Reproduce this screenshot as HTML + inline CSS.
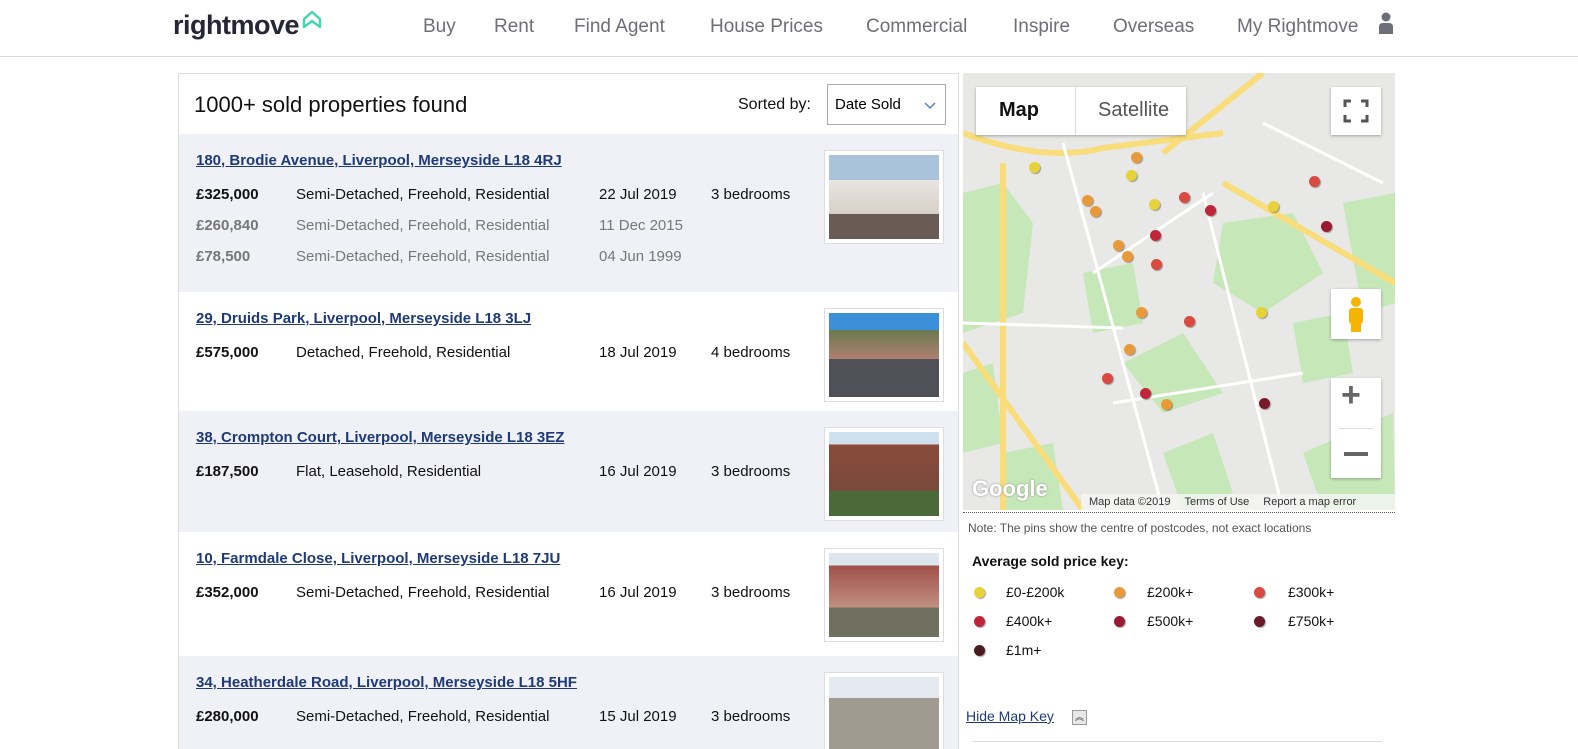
<!DOCTYPE html><html style="overflow:hidden;width:1578px;height:749px"><head><style>
body{margin:0;width:1578px;height:749px;overflow:hidden;background:#fff;font-family:"Liberation Sans",sans-serif;position:relative}
.hdr{position:absolute;left:0;top:0;width:1578px;height:56px;border-bottom:1px solid #d8d8d8}
.logo{position:absolute;left:173px;top:10px;font-size:27px;font-weight:bold;color:#262637;letter-spacing:-0.5px}
.nav{position:absolute;top:16px;font-size:19px;color:#6e6e78}
.panel{position:absolute;left:178px;top:73px;width:779px;height:676px;border:1px solid #ddd;border-bottom:none;overflow:hidden}
.row{position:absolute;left:0;width:779px}
.g{background:#f0f1f6}
.addr{position:absolute;left:17px;top:18px;font-size:15px;font-weight:bold;color:#1e3a78;text-decoration:underline}
.l{position:absolute;font-size:15px;color:#111}
.o{color:#777}
.ph{position:absolute;left:645px;top:16px;width:118px;height:92px;border:1px solid #ddd;background:#fff}
.ph div{position:absolute;left:4px;top:4px;right:4px;bottom:4px}
.map{position:absolute;left:963px;top:73px;width:432px;height:437px;background:#e8e8e6;overflow:hidden}
.pin{position:absolute;width:11px;height:11px;border-radius:50%;box-shadow:1px 1px 1px rgba(0,0,0,.35)}
.k{position:absolute;font-size:14px;color:#111}
.kd{position:absolute;width:11px;height:11px;border-radius:50%;box-shadow:1px 1px 1px rgba(0,0,0,.35)}
</style></head><body>
<div class="hdr">
<div class="logo">rightmove<svg width="22" height="22" viewBox="0 0 22 22" style="position:absolute;left:128px;top:-1px"><path d="M3 18V10L11 3L19 10V18L11 12Z" fill="none" stroke="#3fd6b0" stroke-width="2.4" stroke-linejoin="round"/></svg></div>
<span class="nav" style="left:423px">Buy</span><span class="nav" style="left:494px">Rent</span><span class="nav" style="left:574px">Find Agent</span><span class="nav" style="left:710px">House Prices</span><span class="nav" style="left:866px">Commercial</span><span class="nav" style="left:1013px">Inspire</span><span class="nav" style="left:1113px">Overseas</span><span class="nav" style="left:1237px">My Rightmove</span>
<svg width="16" height="22" viewBox="0 0 16 22" style="position:absolute;left:1378px;top:12px"><circle cx="8" cy="5" r="4.5" fill="#6e6e78"/><path d="M1 22V15Q1 11 5 11H11Q15 11 15 15V22Z" fill="#6e6e78"/></svg>
</div>
<div class="panel">
<div style="position:absolute;left:15px;top:18px;font-size:22px;color:#111">1000+ sold properties found</div>
<div style="position:absolute;left:559px;top:22px;font-size:16px;color:#111">Sorted by:</div>
<div style="position:absolute;left:648px;top:10px;width:117px;height:39px;border:1px solid #aaa;background:#fff"><span style="position:absolute;left:7px;top:11px;font-size:15px">Date Sold</span><svg width="12" height="8" style="position:absolute;left:96px;top:17px"><path d="M1 1L6 6L11 1" fill="none" stroke="#6a8fd0" stroke-width="1.6"/></svg></div>

<div class="row g" style="top:60px;height:158px"><div class="addr">180, Brodie Avenue, Liverpool, Merseyside L18 4RJ</div>
<div class="l" style="left:17px;top:52px;font-weight:bold">£325,000</div><div class="l" style="left:117px;top:52px">Semi-Detached, Freehold, Residential</div><div class="l" style="left:420px;top:52px">22 Jul 2019</div><div class="l" style="left:532px;top:52px">3 bedrooms</div>
<div class="l o" style="left:17px;top:83px;font-weight:bold">£260,840</div><div class="l o" style="left:117px;top:83px">Semi-Detached, Freehold, Residential</div><div class="l o" style="left:420px;top:83px">11 Dec 2015</div>
<div class="l o" style="left:17px;top:114px;font-weight:bold">£78,500</div><div class="l o" style="left:117px;top:114px">Semi-Detached, Freehold, Residential</div><div class="l o" style="left:420px;top:114px">04 Jun 1999</div>
<div class="ph"><div style="background:linear-gradient(#a9c3dc 30%,#e8e4e0 30%,#d8d0c8 70%,#6b5b55 70%)"></div></div></div>

<div class="row" style="top:218px;height:119px"><div class="addr">29, Druids Park, Liverpool, Merseyside L18 3LJ</div>
<div class="l" style="left:17px;top:52px;font-weight:bold">£575,000</div><div class="l" style="left:117px;top:52px">Detached, Freehold, Residential</div><div class="l" style="left:420px;top:52px">18 Jul 2019</div><div class="l" style="left:532px;top:52px">4 bedrooms</div>
<div class="ph"><div style="background:linear-gradient(#3a8fd8 20%,#6a7a50 20%,#b08070 55%,#505058 55%)"></div></div></div>

<div class="row g" style="top:337px;height:121px"><div class="addr">38, Crompton Court, Liverpool, Merseyside L18 3EZ</div>
<div class="l" style="left:17px;top:52px;font-weight:bold">£187,500</div><div class="l" style="left:117px;top:52px">Flat, Leasehold, Residential</div><div class="l" style="left:420px;top:52px">16 Jul 2019</div><div class="l" style="left:532px;top:52px">3 bedrooms</div>
<div class="ph"><div style="background:linear-gradient(#cfe0ee 15%,#8a4a3a 15%,#7a4a3a 70%,#4a6a3a 70%)"></div></div></div>

<div class="row" style="top:458px;height:124px"><div class="addr">10, Farmdale Close, Liverpool, Merseyside L18 7JU</div>
<div class="l" style="left:17px;top:52px;font-weight:bold">£352,000</div><div class="l" style="left:117px;top:52px">Semi-Detached, Freehold, Residential</div><div class="l" style="left:420px;top:52px">16 Jul 2019</div><div class="l" style="left:532px;top:52px">3 bedrooms</div>
<div class="ph"><div style="background:linear-gradient(#dde6ef 15%,#a05048 15%,#c09080 65%,#707060 65%)"></div></div></div>

<div class="row g" style="top:582px;height:120px"><div class="addr">34, Heatherdale Road, Liverpool, Merseyside L18 5HF</div>
<div class="l" style="left:17px;top:52px;font-weight:bold">£280,000</div><div class="l" style="left:117px;top:52px">Semi-Detached, Freehold, Residential</div><div class="l" style="left:420px;top:52px">15 Jul 2019</div><div class="l" style="left:532px;top:52px">3 bedrooms</div>
<div class="ph"><div style="background:linear-gradient(#e4eaf0 25%,#a09a90 25%)"></div></div></div>
</div>

<div class="map">
<svg width="432" height="437" style="position:absolute;left:0;top:0">
<g fill="#c6e8b8"><path d="M0 120L40 110L70 150L60 240L0 260Z"/><path d="M260 150L330 140L360 200L300 240L250 210Z"/><path d="M120 200L170 190L180 250L130 260Z"/><path d="M0 300L30 290L40 370L0 380Z"/><path d="M160 290L220 260L260 320L200 340Z"/><path d="M340 380L430 340L432 437L360 437Z"/><path d="M40 380L90 370L100 437L40 437Z"/><path d="M200 380L250 360L270 420L220 437Z"/><path d="M380 130L432 120L432 230L400 240Z"/><path d="M330 250L380 240L390 300L340 310Z"/></g>
<g fill="none" stroke="#f9dd7a" stroke-width="6"><path d="M0 60Q80 90 140 75L260 60"/><path d="M200 80L300 0"/><path d="M260 110L432 210"/><path d="M0 270L120 437"/><path d="M40 90L40 437"/></g>
<g fill="none" stroke="#fff" stroke-width="3"><path d="M100 70L200 437"/><path d="M130 200L250 120"/><path d="M0 250L160 255"/><path d="M150 330L340 300"/><path d="M240 120L320 437"/><path d="M300 50L420 110"/></g>
</svg>
<div style="position:absolute;left:13px;top:14px;width:210px;height:48px;background:#fff;box-shadow:0 1px 3px rgba(0,0,0,.3)"><span style="position:absolute;left:23px;top:12px;font-size:20px;font-weight:bold;color:#111">Map</span><span style="position:absolute;left:99px;top:0;width:1px;height:48px;background:#ddd"></span><span style="position:absolute;left:122px;top:12px;font-size:20px;color:#555">Satellite</span></div>
<div style="position:absolute;left:368px;top:14px;width:50px;height:48px;background:#fff;box-shadow:0 1px 3px rgba(0,0,0,.3)"><svg width="50" height="48"><path d="M14 20V14H20M30 14H36V20M36 28V34H30M20 34H14V28" fill="none" stroke="#555" stroke-width="3"/></svg></div>
<div style="position:absolute;left:368px;top:216px;width:50px;height:50px;background:#fff;box-shadow:0 1px 3px rgba(0,0,0,.3)"><svg width="50" height="50"><circle cx="25" cy="13" r="5" fill="#f5b400"/><rect x="18" y="19" width="14" height="16" rx="3" fill="#f5b400"/><rect x="20" y="33" width="10" height="10" fill="#f5b400"/></svg></div>
<div style="position:absolute;left:368px;top:305px;width:50px;height:100px;background:#fff;box-shadow:0 1px 3px rgba(0,0,0,.3)"><div style="position:absolute;left:10px;top:-2px;font-size:34px;color:#666;font-weight:bold">+</div><div style="position:absolute;left:8px;top:50px;width:34px;height:1px;background:#ddd"></div><div style="position:absolute;left:13px;top:74px;width:24px;height:4px;background:#666"></div></div>
<div style="position:absolute;left:9px;top:403px;font-size:22px;font-weight:bold;color:#fff;text-shadow:0 0 2px #888">Google</div>
<div style="position:absolute;left:118px;top:421px;width:314px;height:16px;background:rgba(245,245,245,.8);font-size:11px;color:#333;line-height:16px"><span style="margin-left:8px">Map data ©2019</span><span style="margin-left:14px">Terms of Use</span><span style="margin-left:14px">Report a map error</span></div>
<div class="pin" style="left:66px;top:89px;background:#e8d23a"></div><div class="pin" style="left:168px;top:79px;background:#e89a3a"></div><div class="pin" style="left:163px;top:97px;background:#e8d23a"></div><div class="pin" style="left:119px;top:122px;background:#e89a3a"></div><div class="pin" style="left:127px;top:133px;background:#e89a3a"></div><div class="pin" style="left:186px;top:126px;background:#e8d23a"></div><div class="pin" style="left:216px;top:119px;background:#d94b40"></div><div class="pin" style="left:242px;top:132px;background:#c0263a"></div><div class="pin" style="left:187px;top:157px;background:#c0263a"></div><div class="pin" style="left:150px;top:167px;background:#e89a3a"></div><div class="pin" style="left:159px;top:178px;background:#e89a3a"></div><div class="pin" style="left:188px;top:186px;background:#d94b40"></div><div class="pin" style="left:173px;top:234px;background:#e89a3a"></div><div class="pin" style="left:221px;top:243px;background:#d94b40"></div><div class="pin" style="left:161px;top:271px;background:#e89a3a"></div><div class="pin" style="left:139px;top:300px;background:#d94b40"></div><div class="pin" style="left:177px;top:315px;background:#c0263a"></div><div class="pin" style="left:198px;top:326px;background:#e89a3a"></div><div class="pin" style="left:296px;top:325px;background:#7a1a28"></div><div class="pin" style="left:293px;top:234px;background:#e8d23a"></div><div class="pin" style="left:305px;top:128px;background:#e8d23a"></div><div class="pin" style="left:346px;top:103px;background:#d94b40"></div><div class="pin" style="left:358px;top:148px;background:#9a1a30"></div>
</div>
<div style="position:absolute;left:963px;top:512px;width:432px;border-top:1px dotted #555"></div>
<div style="position:absolute;left:968px;top:521px;font-size:12px;color:#555">Note: The pins show the centre of postcodes, not exact locations</div>
<div style="position:absolute;left:972px;top:553px;font-size:14px;font-weight:bold;color:#111">Average sold price key:</div>
<div class="kd" style="left:974px;top:587px;background:#e8d23a"></div><div class="k" style="left:1006px;top:584px">£0-£200k</div>
<div class="kd" style="left:1114px;top:587px;background:#e89a3a"></div><div class="k" style="left:1147px;top:584px">£200k+</div>
<div class="kd" style="left:1254px;top:587px;background:#d94b40"></div><div class="k" style="left:1288px;top:584px">£300k+</div>
<div class="kd" style="left:974px;top:616px;background:#c0263a"></div><div class="k" style="left:1006px;top:613px">£400k+</div>
<div class="kd" style="left:1114px;top:616px;background:#9a1a30"></div><div class="k" style="left:1147px;top:613px">£500k+</div>
<div class="kd" style="left:1254px;top:616px;background:#6a1a28"></div><div class="k" style="left:1288px;top:613px">£750k+</div>
<div class="kd" style="left:974px;top:645px;background:#4a1c1e"></div><div class="k" style="left:1006px;top:642px">£1m+</div>
<div style="position:absolute;left:966px;top:708px;font-size:14px;color:#1e3a78;text-decoration:underline">Hide Map Key</div>
<div style="position:absolute;left:1072px;top:710px;width:13px;height:13px;border:1px solid #999;background:#e8e8e8;font-size:9px;text-align:center;line-height:12px;color:#333">︽</div>
<div style="position:absolute;left:972px;top:741px;width:410px;height:1px;background:#ddd"></div>
</body></html>
